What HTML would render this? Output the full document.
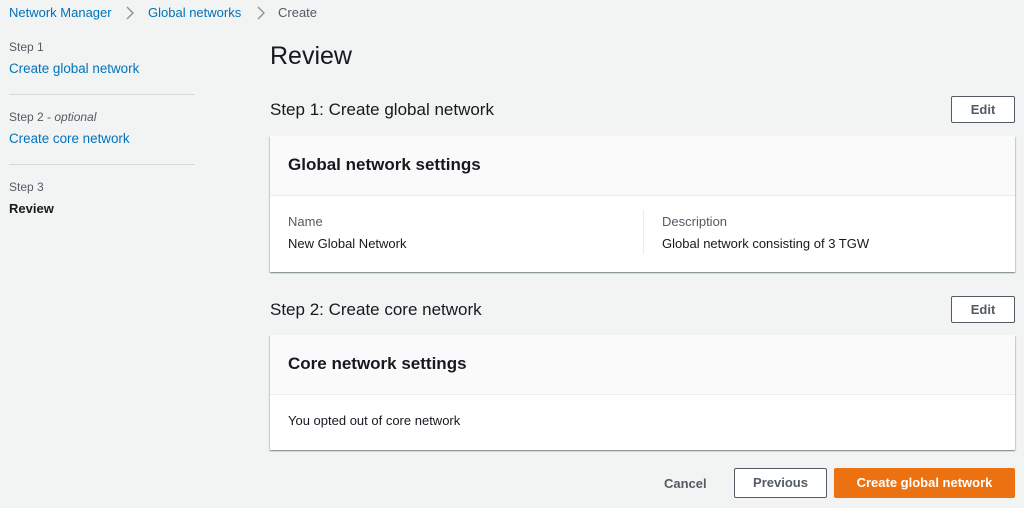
<!DOCTYPE html>
<html><head><meta charset="utf-8"><style>
*{margin:0;padding:0;box-sizing:border-box}
body{width:1024px;height:508px;background:#f2f3f3;font-family:"Liberation Sans",sans-serif;color:#16191f;position:relative;overflow:hidden;font-size:13px}
.a{position:absolute;white-space:nowrap}
.link{color:#0073bb}
.g{color:#545b64}
.sep{position:absolute;left:9px;width:186px;height:1px;background:#d5dbdb}
.card{position:absolute;left:270px;width:745px;background:#fff;box-shadow:0 1px 1px rgba(0,28,36,.3),1px 1px 1px rgba(0,28,36,.15),-1px 1px 1px rgba(0,28,36,.15)}
.ch{position:absolute;left:0;top:0;right:0;height:60px;background:#fafafa;border-bottom:1px solid #eaeded}
.btn{position:absolute;border:1px solid #545b64;background:#fff;border-radius:2px;font-weight:bold;color:#545b64;font-size:13px;text-align:center}
</style></head><body>
<div class="a link" style="left:9px;top:5px;font-size:13px">Network Manager</div>
<svg class="a" style="left:125px;top:6px" width="10" height="14"><path d="M2 1l6 6-6 6" fill="none" stroke="#879596" stroke-width="1.4"/></svg>
<div class="a link" style="left:148px;top:5px">Global networks</div>
<svg class="a" style="left:256px;top:6px" width="10" height="14"><path d="M2 1l6 6-6 6" fill="none" stroke="#879596" stroke-width="1.4"/></svg>
<div class="a g" style="left:278px;top:5px">Create</div>

<div class="a g" style="left:9px;top:40px;font-size:12px">Step 1</div>
<div class="a link" style="left:9px;top:61px;font-size:13.4px">Create global network</div>
<div class="sep" style="top:94px"></div>
<div class="a g" style="left:9px;top:110px;font-size:12px">Step 2 - <i>optional</i></div>
<div class="a link" style="left:9px;top:131px;font-size:13.4px">Create core network</div>
<div class="sep" style="top:164px"></div>
<div class="a g" style="left:9px;top:180px;font-size:12px">Step 3</div>
<div class="a" style="left:9px;top:201px;font-weight:bold">Review</div>

<div class="a" style="left:270px;top:42px;font-size:25px">Review</div>
<div class="a" style="left:270px;top:100px;font-size:17px">Step 1: Create global network</div>
<div class="btn" style="left:951px;top:96px;width:64px;height:27px;line-height:25px">Edit</div>
<div class="card" style="top:136px;height:136px">
 <div class="ch"></div>
 <div class="a" style="left:18px;top:19px;font-size:17px;font-weight:bold">Global network settings</div>
 <div class="a g" style="left:18px;top:78px">Name</div>
 <div class="a" style="left:18px;top:100px">New Global Network</div>
 <div class="a" style="left:373px;top:74px;width:1px;height:44px;background:#eaeded"></div>
 <div class="a g" style="left:392px;top:78px">Description</div>
 <div class="a" style="left:392px;top:100px">Global network consisting of 3 TGW</div>
</div>

<div class="a" style="left:270px;top:300px;font-size:17px">Step 2: Create core network</div>
<div class="btn" style="left:951px;top:296px;width:64px;height:27px;line-height:25px">Edit</div>
<div class="card" style="top:335px;height:115px">
 <div class="ch"></div>
 <div class="a" style="left:18px;top:19px;font-size:17px;font-weight:bold">Core network settings</div>
 <div class="a" style="left:18px;top:78px">You opted out of core network</div>
</div>

<div class="a" style="left:664px;top:476px;font-weight:bold;color:#545b64">Cancel</div>
<div class="btn" style="left:734px;top:468px;width:93px;height:30px;line-height:28px">Previous</div>
<div class="btn" style="left:834px;top:468px;width:181px;height:30px;line-height:28px;background:#ec7211;border-color:#ec7211;color:#fff">Create global network</div>
</body></html>
